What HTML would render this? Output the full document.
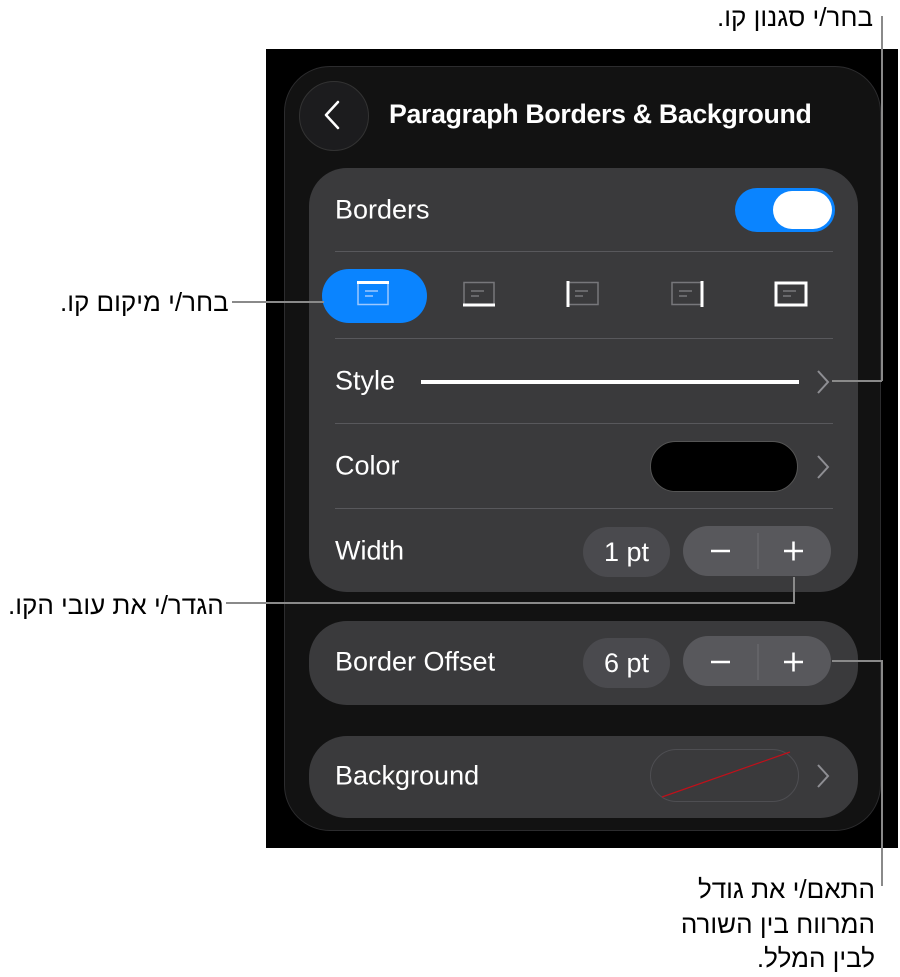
<!DOCTYPE html>
<html><head><meta charset="utf-8"><style>
*{margin:0;padding:0;box-sizing:border-box}
body{width:900px;height:977px;background:#fff;position:relative;overflow:hidden;font-family:"Liberation Sans","Noto Sans CJK SC",sans-serif}
.a{position:absolute}
.heb{position:absolute;font-family:"Liberation Sans","DejaVu Sans",sans-serif;font-size:26px;color:#000;direction:rtl;white-space:nowrap}
.ln{position:absolute;background:#8a8a8a}
.lbl{position:absolute;color:#fff;font-size:27px;transform:translateY(-50%)}
.sep{position:absolute;left:335px;width:498px;height:1px;background:#58585c}
.card{position:absolute;left:309px;width:549px;background:#3a3a3c;border-radius:38px}
.pill{position:absolute;background:#4a4a4e;border-radius:25px;color:#fff;font-size:27px;display:flex;align-items:center;justify-content:center}
.step{position:absolute;background:#58585c;border-radius:25px}
</style></head><body>
<div class="a" style="left:266px;top:49px;width:632px;height:799px;background:#000"></div>
<div class="a" style="left:284px;top:66px;width:597px;height:765px;background:#121212;border:1px solid #2c2c2e;border-radius:46px"></div>
<div class="a" style="left:299px;top:81px;width:70px;height:70px;border-radius:50%;background:#1c1c1e;border:1px solid #333"></div>
<svg class="a" style="left:318px;top:98px" width="30" height="36"><path d="M20 4 L8 17 L20 30" stroke="#fff" stroke-width="2.5" fill="none" stroke-linecap="round" stroke-linejoin="round"/></svg>
<div class="a" style="left:389px;top:99px;color:#fff;font-size:26.7px;font-weight:bold;letter-spacing:-0.3px">Paragraph Borders &amp; Background</div>

<div class="card" style="top:168px;height:424px"></div>
<div class="lbl" style="left:335px;top:210px">Borders</div>
<div class="a" style="left:735px;top:188px;width:100px;height:44px;border-radius:22px;background:#0a84ff"></div>
<div class="a" style="left:773px;top:191px;width:59px;height:38px;border-radius:19px;background:#fff"></div>
<div class="sep" style="top:251px"></div>
<div class="a" style="left:322px;top:269px;width:105px;height:54px;border-radius:27px;background:#0a84ff"></div>
<svg class="a" style="left:357px;top:281px" width="33" height="26"><rect x="1" y="1.5" width="30" height="22" fill="none" stroke="#9cc8ff" stroke-width="1.5"/><line x1="0" y1="1.5" x2="32" y2="1.5" stroke="#fff" stroke-width="3"/><line x1="8" y1="10" x2="21" y2="10" stroke="#9cc8ff" stroke-width="1.5"/><line x1="8" y1="15" x2="16" y2="15" stroke="#9cc8ff" stroke-width="1.5"/></svg>
<svg class="a" style="left:463px;top:281px" width="33" height="27"><rect x="1" y="1.5" width="30" height="22" fill="none" stroke="#77777b" stroke-width="1.5"/><line x1="0" y1="24" x2="32" y2="24" stroke="#fff" stroke-width="3"/><line x1="8" y1="10" x2="21" y2="10" stroke="#77777b" stroke-width="1.5"/><line x1="8" y1="15" x2="16" y2="15" stroke="#77777b" stroke-width="1.5"/></svg>
<svg class="a" style="left:566px;top:281px" width="33" height="27"><rect x="2" y="1.5" width="30" height="22" fill="none" stroke="#77777b" stroke-width="1.5"/><line x1="2" y1="0" x2="2" y2="26" stroke="#fff" stroke-width="3"/><line x1="9" y1="10" x2="22" y2="10" stroke="#77777b" stroke-width="1.5"/><line x1="9" y1="15" x2="17" y2="15" stroke="#77777b" stroke-width="1.5"/></svg>
<svg class="a" style="left:671px;top:281px" width="33" height="27"><rect x="1" y="1.5" width="30" height="22" fill="none" stroke="#77777b" stroke-width="1.5"/><line x1="31" y1="0" x2="31" y2="26" stroke="#fff" stroke-width="3"/><line x1="8" y1="10" x2="21" y2="10" stroke="#77777b" stroke-width="1.5"/><line x1="8" y1="15" x2="16" y2="15" stroke="#77777b" stroke-width="1.5"/></svg>
<svg class="a" style="left:774px;top:281px" width="34" height="27"><rect x="2" y="2" width="30" height="22" fill="none" stroke="#fff" stroke-width="3"/><line x1="9" y1="10" x2="22" y2="10" stroke="#77777b" stroke-width="1.5"/><line x1="9" y1="15" x2="17" y2="15" stroke="#77777b" stroke-width="1.5"/></svg>
<div class="sep" style="top:338px"></div>
<div class="lbl" style="left:335px;top:381px">Style</div>
<div class="a" style="left:421px;top:380px;width:378px;height:4px;background:#fff"></div>
<svg class="a" style="left:814px;top:368px" width="20" height="28"><path d="M4 3 L14 14 L4 25" stroke="#8e8e93" stroke-width="2" fill="none"/></svg>
<div class="sep" style="top:423px"></div>
<div class="lbl" style="left:335px;top:466px">Color</div>
<div class="a" style="left:650px;top:441px;width:148px;height:51px;border-radius:26px;background:#000;border:1px solid #555"></div>
<svg class="a" style="left:814px;top:453px" width="20" height="28"><path d="M4 3 L14 14 L4 25" stroke="#8e8e93" stroke-width="2" fill="none"/></svg>
<div class="sep" style="top:508px"></div>
<div class="lbl" style="left:335px;top:551px">Width</div>
<div class="pill" style="left:583px;top:527px;width:87px;height:50px">1 pt</div>
<div class="step" style="left:683px;top:526px;width:148px;height:50px"></div>

<div class="card" style="top:621px;height:84px"></div>
<div class="lbl" style="left:335px;top:662px">Border Offset</div>
<div class="pill" style="left:583px;top:638px;width:87px;height:50px">6 pt</div>
<div class="step" style="left:683px;top:636px;width:148px;height:50px"></div>

<svg class="a" style="left:683px;top:526px" width="148" height="162">
<g stroke="#fff" stroke-width="2.5"><line x1="28" y1="25" x2="47" y2="25"/><line x1="101" y1="25" x2="120" y2="25"/><line x1="110.5" y1="15.5" x2="110.5" y2="34.5"/>
<line x1="28" y1="136" x2="47" y2="136"/><line x1="101" y1="136" x2="120" y2="136"/><line x1="110.5" y1="126.5" x2="110.5" y2="145.5"/></g>
<g stroke="#6e6e72" stroke-width="1"><line x1="75" y1="7" x2="75" y2="43"/><line x1="75" y1="118" x2="75" y2="154"/></g></svg>

<div class="card" style="top:736px;height:82px"></div>
<div class="lbl" style="left:335px;top:776px">Background</div>
<div class="a" style="left:650px;top:749px;width:149px;height:53px;border-radius:27px;border:1px solid #4e4e52;overflow:hidden"></div>
<svg class="a" style="left:650px;top:749px" width="149" height="53"><line x1="12" y1="48" x2="140" y2="3" stroke="#c0101a" stroke-width="1.2"/></svg>
<svg class="a" style="left:814px;top:762px" width="20" height="28"><path d="M4 3 L14 14 L4 25" stroke="#8e8e93" stroke-width="2" fill="none"/></svg>

<!-- callouts -->
<div class="heb" style="right:27px;top:2px">בחר/י סגנון קו.</div>
<div class="ln" style="left:881px;top:16px;width:1.5px;height:365px"></div>
<div class="ln" style="left:832px;top:380px;width:50px;height:1.5px"></div>

<div class="heb" style="left:60px;top:287px">בחר/י מיקום קו.</div>
<div class="ln" style="left:232px;top:301px;width:92px;height:1.5px"></div>

<div class="heb" style="left:8px;top:590px">הגדר/י את עובי הקו.</div>
<div class="ln" style="left:226px;top:602px;width:569px;height:1.5px"></div>
<div class="ln" style="left:793px;top:577px;width:1.5px;height:26px"></div>

<div class="ln" style="left:832px;top:660px;width:50px;height:1.5px"></div>
<div class="ln" style="left:881px;top:660px;width:1.5px;height:226px"></div>
<div class="heb" style="right:25px;top:872px;line-height:34.5px;text-align:right">התאם/י את גודל<br>המרווח בין השורה<br>לבין המלל.</div>
</body></html>
